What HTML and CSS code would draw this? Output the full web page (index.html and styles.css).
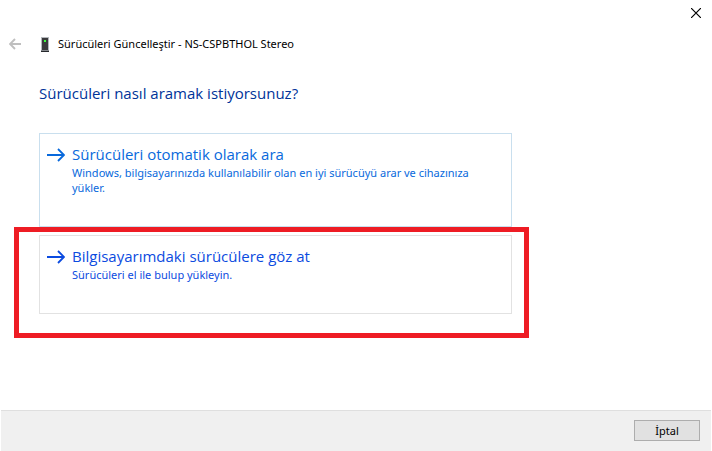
FILE: index.html
```html
<!DOCTYPE html>
<html lang="tr">
<head>
    <meta charset="UTF-8">
    <meta name="viewport" content="width=device-width, initial-scale=1.0">
    <title>Sürücüleri Güncelleştir</title>
    <link rel="stylesheet" href="styles.css">
</head>
<body>
    <div class="window">
        <div class="titlebar">
            <button class="icon-button" type="button" aria-label="Kapat">
                <svg width="10" height="10" viewBox="0 0 10 10">
                    <path d="M0 0L10 10M10 0L0 10" fill="none" stroke="#000" stroke-width="1.2"/>
                </svg>
            </button>
        </div>

        <header class="header">
            <button class="icon-button back" type="button" aria-label="Geri" disabled>
                <svg width="12" height="12" viewBox="0 0 12 12">
                    <path d="M12 6H1M6 1L1 6L6 11" fill="none" stroke="#bfbfbf" stroke-width="1.9"/>
                </svg>
            </button>
            <svg class="device" width="10" height="15" viewBox="0 0 10 15">
                <path d="M1 0H9V13H1Z" fill="#b4b8bc"/>
                <path d="M2 1H8V13H2Z" fill="#3a3a3c"/>
                <path d="M4 3H6V5H4Z" fill="#3dff3d"/>
                <path d="M1 13H9V14H1Z" fill="#85888c"/>
                <path d="M1 14H9V15H1Z" fill="#25282c"/>
            </svg>
            <span class="title">Sürücüleri Güncelleştir - NS-CSPBTHOL Stereo</span>
        </header>

        <main class="content">
            <h1>Sürücüleri nasıl aramak istiyorsunuz?</h1>
            <div class="options">
                <button class="option selected" type="button">
                    <svg class="arrow" width="18" height="14" viewBox="0 0 18 14">
                        <path d="M0 7H17M11 1L17 7L11 13" fill="none" stroke="currentColor" stroke-width="1.8"/>
                    </svg>
                    <span class="option-text">
                        <span class="option-title">Sürücüleri otomatik olarak ara</span>
                        <span class="option-note">Windows, bilgisayarınızda kullanılabilir olan en iyi sürücüyü arar ve cihazınıza yükler.</span>
                    </span>
                </button>
                <div class="marked">
                    <button class="option browse" type="button">
                        <svg class="arrow" width="18" height="14" viewBox="0 0 18 14">
                            <path d="M0 7H17M11 1L17 7L11 13" fill="none" stroke="currentColor" stroke-width="1.8"/>
                        </svg>
                        <span class="option-text">
                            <span class="option-title">Bilgisayarımdaki sürücülere göz at</span>
                            <span class="option-note">Sürücüleri el ile bulup yükleyin.</span>
                        </span>
                    </button>
                </div>
            </div>
        </main>

        <footer class="footer">
            <button class="cancel" type="button">İptal</button>
        </footer>
    </div>
</body>
</html>
```

FILE: styles.css
```css
* {
    box-sizing: border-box;
}
body {
    margin: 0;
    background-color: white;
    font-family: "Noto Sans", "Open Sans", sans-serif;
    font-size: 11px;
    color: black;
}
button {
    font-family: inherit;
    font-size: inherit;
}
.window {
    display: flex;
    flex-direction: column;
    min-height: 100vh;
    padding: 0 1px;
}
.titlebar {
    display: flex;
    justify-content: flex-end;
    padding: 8px 10px 0;
}
.icon-button {
    display: flex;
    padding: 0;
    border: none;
    background: none;
}
.header {
    display: flex;
    align-items: center;
    padding: 18px 8px 0;
}
.back {
    margin-right: 19px;
}
.device {
    margin-right: 8px;
}
.title {
    line-height: 16px;
}
.content {
    flex: 1;
    padding: 30px 38px 96px;
}
h1 {
    margin: 0 0 28px;
    font-family: "Open Sans", "Noto Sans", sans-serif;
    font-size: 15px;
    font-weight: normal;
    line-height: 23px;
    color: #003399;
}
.options {
    display: flex;
    flex-direction: column;
    gap: 8px;
    max-width: 473px;
}
.option {
    display: flex;
    align-items: flex-start;
    gap: 7px;
    width: 100%;
    min-height: 79px;
    padding: 9px 24px 9px 7px;
    border: 1px solid #e2e2e2;
    background-color: white;
    text-align: left;
    color: #0b4be0;
}
.option.selected {
    min-height: 94px;
    border-color: #c9dfee;
    color: #0869dc;
}
.arrow {
    flex: none;
    margin-top: 5px;
}
.option-text {
    display: flex;
    flex-direction: column;
}
.option-title {
    font-family: "Open Sans", "Noto Sans", sans-serif;
    font-size: 15px;
    line-height: 22px;
}
.option-note {
    line-height: 15px;
}
/* red frame drawn around the option to pick */
.marked {
    position: relative;
}
.marked::after {
    content: "";
    position: absolute;
    inset: -8px -17px -24px -25px;
    border: 5px solid #ee1c24;
    pointer-events: none;
}
.footer {
    display: flex;
    justify-content: flex-end;
    padding: 9px 11px 10px;
    border-top: 1px solid #dfdfdf;
    background-color: #f0f0f0;
}
.cancel {
    width: 66px;
    height: 21px;
    padding: 0;
    border: 1px solid #adadad;
    background-color: #e1e1e1;
}
```
